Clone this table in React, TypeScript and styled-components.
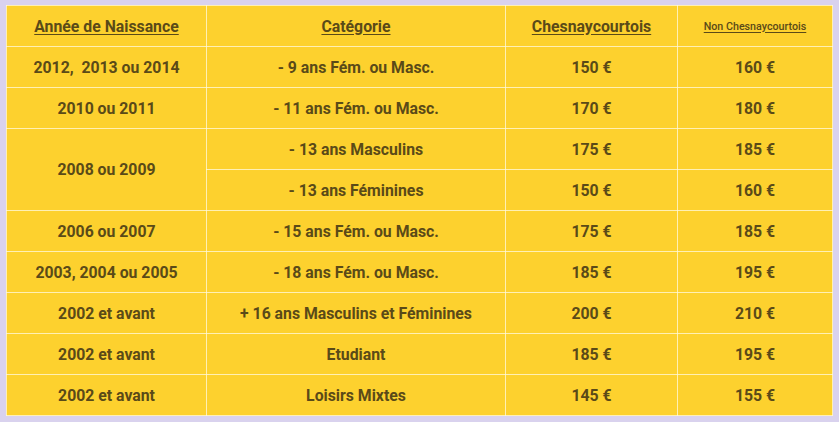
import styled, { createGlobalStyle } from 'styled-components'

const GlobalStyle = createGlobalStyle`
    html, body {
        margin: 0;
        padding: 0;
        background: #d9d2ee;
    }
`

const Page = styled.div`
    width: 839px;
    height: 422px;
    padding: 5px 0 0 6px;
    box-sizing: border-box;
    background: #d9d2ee;
`

const Table = styled.table`
    border-collapse: collapse;
    table-layout: fixed;
    width: 826px;
    background: #fdd12e;
    font-family: Roboto, 'Liberation Sans', sans-serif;
    color: #5a4a18;
`

const Cell = styled.td<{ small?: boolean }>`
    height: 40px;
    padding: 0;
    text-align: center;
    vertical-align: middle;
    white-space: pre;
    border: 1px solid rgba(255, 250, 225, 0.75);
    font-size: ${props => (props.small ? '10.7px' : '15.8px')};
    font-weight: ${props => (props.small ? 500 : 700)};
`

const HeadCell = styled(Cell).attrs({ as: 'th' })``

const HeadText = styled.span`
    text-decoration: underline;
    text-underline-offset: 2px;
`

type Row = {
    year?: string
    span?: number
    category: string
    local: string
    other: string
}

const rows: Row[] = [
    { year: '2012,  2013 ou 2014', category: '- 9 ans Fém. ou Masc.', local: '150 €', other: '160 €' },
    { year: '2010 ou 2011', category: '- 11 ans Fém. ou Masc.', local: '170 €', other: '180 €' },
    { year: '2008 ou 2009', span: 2, category: '- 13 ans Masculins', local: '175 €', other: '185 €' },
    { category: '- 13 ans Féminines', local: '150 €', other: '160 €' },
    { year: '2006 ou 2007', category: '- 15 ans Fém. ou Masc.', local: '175 €', other: '185 €' },
    { year: '2003, 2004 ou 2005', category: '- 18 ans Fém. ou Masc.', local: '185 €', other: '195 €' },
    { year: '2002 et avant', category: '+ 16 ans Masculins et Féminines', local: '200 €', other: '210 €' },
    { year: '2002 et avant', category: 'Etudiant', local: '185 €', other: '195 €' },
    { year: '2002 et avant', category: 'Loisirs Mixtes', local: '145 €', other: '155 €' },
]

export default function App() {
    return (
        <>
            <GlobalStyle />
            <Page>
                <Table>
                    <colgroup>
                        <col style={{ width: 200 }} />
                        <col style={{ width: 299 }} />
                        <col style={{ width: 172 }} />
                        <col style={{ width: 155 }} />
                    </colgroup>
                    <thead>
                        <tr>
                            <HeadCell><HeadText>Année de Naissance</HeadText></HeadCell>
                            <HeadCell><HeadText>Catégorie</HeadText></HeadCell>
                            <HeadCell><HeadText>Chesnaycourtois</HeadText></HeadCell>
                            <HeadCell small><HeadText>Non Chesnaycourtois</HeadText></HeadCell>
                        </tr>
                    </thead>
                    <tbody>
                        {rows.map((r, i) => (
                            <tr key={i}>
                                {r.year && <Cell rowSpan={r.span}>{r.year}</Cell>}
                                <Cell>{r.category}</Cell>
                                <Cell>{r.local}</Cell>
                                <Cell>{r.other}</Cell>
                            </tr>
                        ))}
                    </tbody>
                </Table>
            </Page>
        </>
    )
}
